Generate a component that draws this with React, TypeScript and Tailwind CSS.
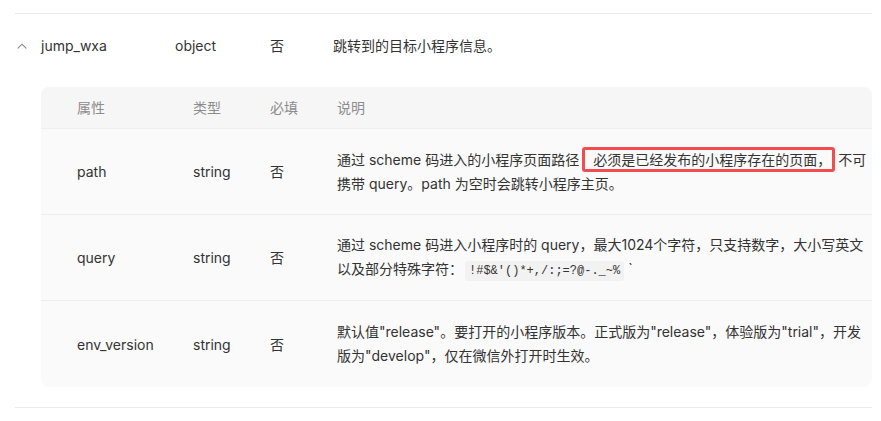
import React from 'react';

const font = "font-['Inter','Noto_Sans_CJK_SC',sans-serif]";

interface SubRow {
  name: string;
  type: string;
  required: string;
  desc: React.ReactNode;
}

const subRows: SubRow[] = [
  {
    name: 'path',
    type: 'string',
    required: '否',
    desc: (
      <>
        通过 scheme 码进入的小程序页面路径
        <span className="ml-[3px] mr-[3px] rounded-[3px] border-[3px] border-[#f24b50] py-[1px] pl-[8px] pr-[1px]">
          必须是已经发布的小程序存在的页面，
        </span>
        不可携带 query。path 为空时会跳转小程序主页。
      </>
    ),
  },
  {
    name: 'query',
    type: 'string',
    required: '否',
    desc: (
      <>
        通过 scheme 码进入小程序时的 query，最大1024个字符，只支持数字，大小写英文以及部分特殊字符：
        <code className="ml-[2px] rounded-[3px] bg-[#f2f2f2] px-[4px] py-[3px] font-['Liberation_Mono',monospace] text-[12px] text-[#333]">
          !#$&'()*+,/:;=?@-._~%
        </code>{' '}
        `
      </>
    ),
  },
  {
    name: 'env_version',
    type: 'string',
    required: '否',
    desc: '默认值"release"。要打开的小程序版本。正式版为"release"，体验版为"trial"，开发版为"develop"，仅在微信外打开时生效。',
  },
];

function Chevron() {
  return (
    <svg width="10" height="6" viewBox="0 0 10 6" fill="none" className="text-[#8a8a8a]">
      <path d="M1 5.2L5 1.2L9 5.2" stroke="currentColor" strokeWidth="1.1" strokeLinecap="round" strokeLinejoin="round" />
    </svg>
  );
}

export default function App() {
  return (
    <div className={`h-[421px] w-[881px] overflow-hidden bg-white ${font} text-[14px] text-[#333]`}>
      <div className="ml-[15px] mt-[13px] w-[857px] border-y border-[#e9e9e9]">
        <div className="flex h-[63px] items-center">
          <div className="flex w-[26px] justify-start pl-[2px]">
            <Chevron />
          </div>
          <div className="w-[134px]">jump_wxa</div>
          <div className="w-[95px]">object</div>
          <div className="w-[63px]">否</div>
          <div>跳转到的目标小程序信息。</div>
        </div>

        <div className="mb-[20px] ml-[26px] mt-[10px] overflow-hidden rounded-[8px] bg-[#fafafa]">
          <div className="flex h-[42px] items-center border-b border-[#eeeeee] bg-[#f6f6f6] text-[#8c8c8c]">
            <div className="w-[152px] pl-[36px]">属性</div>
            <div className="w-[77px]">类型</div>
            <div className="w-[67px]">必填</div>
            <div>说明</div>
          </div>
          {subRows.map((r, i) => (
            <div
              key={r.name}
              className={`flex h-[86px] items-center ${i < subRows.length - 1 ? 'border-b border-[#eeeeee]' : ''}`}
            >
              <div className="w-[152px] shrink-0 pl-[36px]">{r.name}</div>
              <div className="w-[77px] shrink-0">{r.type}</div>
              <div className="w-[67px] shrink-0">{r.required}</div>
              <div className="w-[530px] shrink-0 leading-[24px]">{r.desc}</div>
            </div>
          ))}
        </div>
      </div>
    </div>
  );
}
